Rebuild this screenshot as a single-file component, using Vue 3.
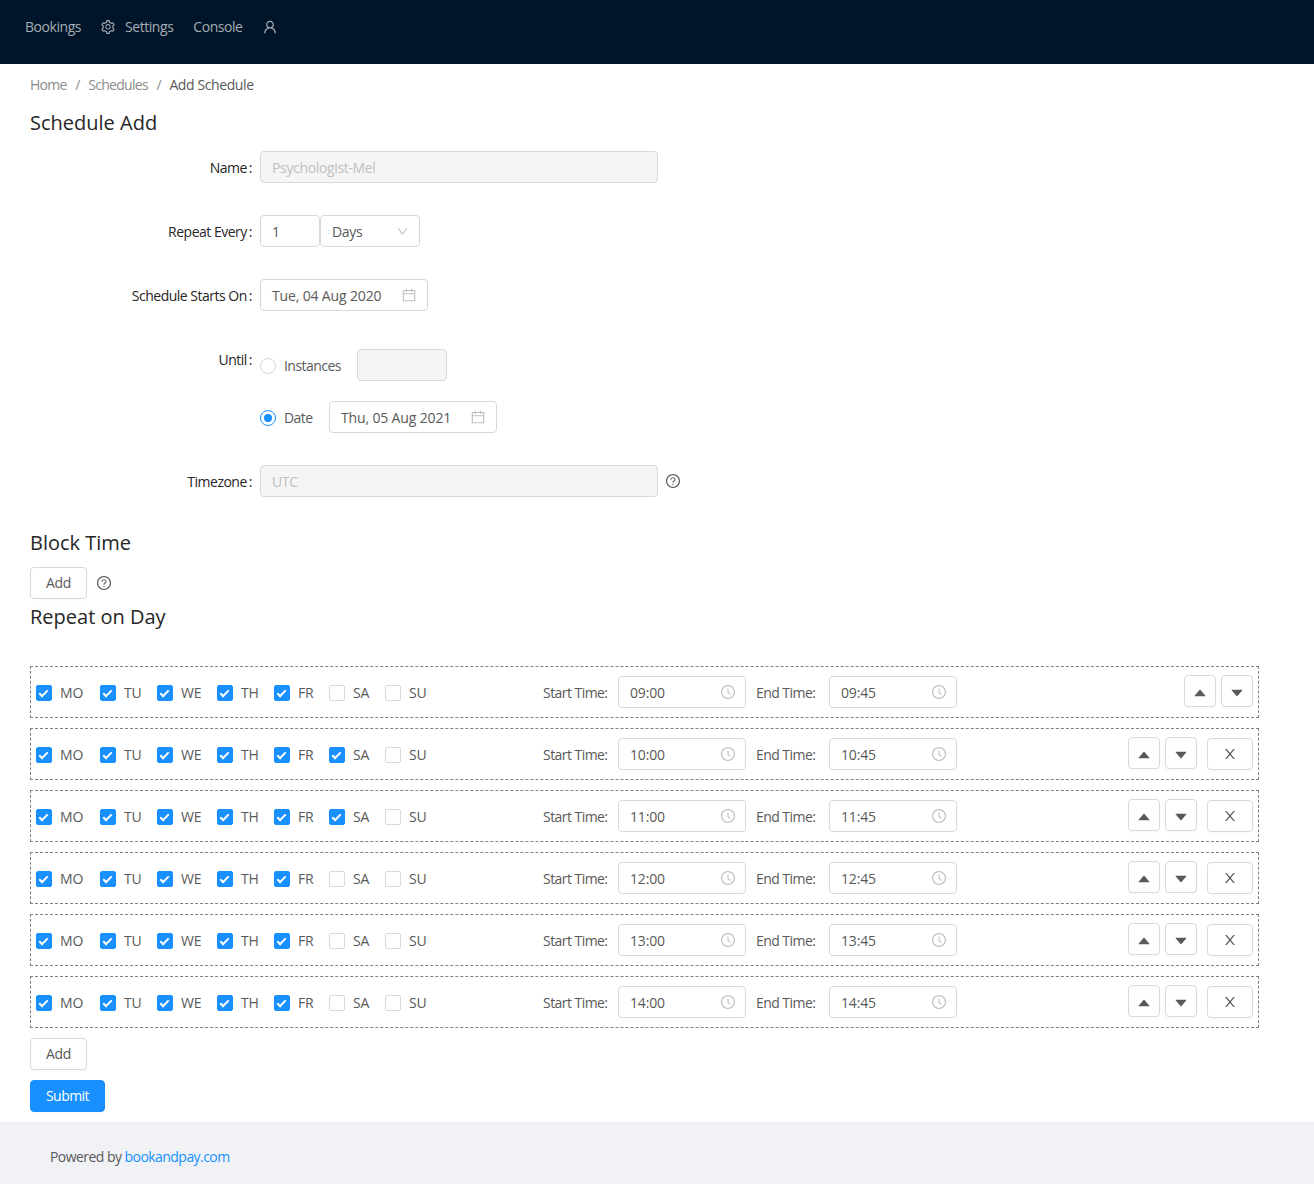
<script setup>
const icons = {
  gear: 'M924.8 625.7l-65.5-56c3.1-19 4.7-38.4 4.7-57.8s-1.6-38.8-4.7-57.8l65.5-56a32.03 32.03 0 0 0 9.3-35.2l-.9-2.6a443.74 443.74 0 0 0-79.7-137.9l-1.8-2.1a32.12 32.12 0 0 0-35.1-9.5l-81.3 28.9c-30-24.6-63.5-44-99.7-57.6l-15.7-85a32.05 32.05 0 0 0-25.8-25.7l-2.7-.5c-52.1-9.4-106.9-9.4-159 0l-2.7.5a32.05 32.05 0 0 0-25.8 25.7l-15.8 85.4a351.86 351.86 0 0 0-99 57.4l-81.9-29.1a32 32 0 0 0-35.1 9.5l-1.8 2.1a446.02 446.02 0 0 0-79.7 137.9l-.9 2.6c-4.5 12.5-.8 26.5 9.3 35.2l66.3 56.6c-3.1 18.8-4.6 38-4.6 57.1 0 19.2 1.5 38.4 4.6 57.1L99 625.5a32.03 32.03 0 0 0-9.3 35.2l.9 2.6c18.1 50.4 44.9 96.9 79.7 137.9l1.8 2.1a32.12 32.12 0 0 0 35.1 9.5l81.9-29.1c29.8 24.5 63.1 43.9 99 57.4l15.8 85.4a32.05 32.05 0 0 0 25.8 25.7l2.7.5a449.4 449.4 0 0 0 159 0l2.7-.5a32.05 32.05 0 0 0 25.8-25.7l15.7-85a350 350 0 0 0 99.7-57.6l81.3 28.9a32 32 0 0 0 35.1-9.5l1.8-2.1c34.8-41.1 61.6-87.5 79.7-137.9l.9-2.6c4.5-12.3.8-26.3-9.3-35zM788.3 465.9c2.5 15.1 3.8 30.6 3.8 46.1s-1.3 31-3.8 46.1l-6.6 40.1 74.7 63.9a370.03 370.03 0 0 1-42.6 73.6L721 702.8l-31.4 25.8c-23.9 19.6-50.5 35-79.3 45.8l-38.1 14.3-17.9 97a377.5 377.5 0 0 1-85 0l-17.9-97.2-37.8-14.5c-28.5-10.8-55-26.2-78.7-45.7l-31.4-25.9-93.4 33.2c-17-22.9-31.2-47.6-42.6-73.6l75.5-64.5-6.5-40c-2.4-14.9-3.7-30.3-3.7-45.5 0-15.3 1.2-30.6 3.7-45.5l6.5-40-75.5-64.5c11.3-26.1 25.6-50.7 42.6-73.6l93.4 33.2 31.4-25.9c23.7-19.5 50.2-34.9 78.7-45.7l37.9-14.3 17.9-97.2c28.1-3.2 56.8-3.2 85 0l17.9 97 38.1 14.3c28.7 10.8 55.4 26.2 79.3 45.8l31.4 25.8 92.8-32.9c17 22.9 31.2 47.6 42.6 73.6L781.8 426l6.5 39.9zM512 326c-97.2 0-176 78.8-176 176s78.8 176 176 176 176-78.8 176-176-78.8-176-176-176zm79.2 255.2A111.6 111.6 0 0 1 512 614c-29.9 0-58-11.7-79.2-32.8A111.6 111.6 0 0 1 400 502c0-29.9 11.7-58 32.8-79.2C454 401.6 482.1 390 512 390c29.9 0 58 11.6 79.2 32.8A111.6 111.6 0 0 1 624 502c0 29.9-11.7 58-32.8 79.2z',
  user: 'M858.5 763.6a374 374 0 0 0-80.6-119.5 375.63 375.63 0 0 0-119.5-80.6c-.4-.2-.8-.3-1.2-.5C719.5 518 760 444.7 760 362c0-137-111-248-248-248S264 225 264 362c0 82.7 40.5 156 102.8 201.1-.4.2-.8.3-1.2.5-44.8 18.9-85 46-119.5 80.6a375.63 375.63 0 0 0-80.6 119.5A371.7 371.7 0 0 0 136 901.8a8 8 0 0 0 8 8.2h60c4.4 0 7.9-3.5 8-7.8 2-77.2 33-149.5 87.8-204.3 56.7-56.7 132-87.9 212.2-87.9s155.5 31.2 212.2 87.9C779 752.7 810 825 812 902.2c.1 4.4 3.6 7.8 8 7.8h60a8 8 0 0 0 8-8.2c-1-47.8-10.9-94.3-29.5-138.2zM512 534c-45.9 0-89.1-17.9-121.6-50.4S340 407.9 340 362c0-45.9 17.9-89.1 50.4-121.6S466.1 190 512 190s89.1 17.9 121.6 50.4S684 316.1 684 362c0 45.9-17.9 89.1-50.4 121.6S557.9 534 512 534z',
  calendar: 'M880 184H712v-64c0-4.4-3.6-8-8-8h-56c-4.4 0-8 3.6-8 8v64H384v-64c0-4.4-3.6-8-8-8h-56c-4.4 0-8 3.6-8 8v64H144c-17.7 0-32 14.3-32 32v664c0 17.7 14.3 32 32 32h736c17.7 0 32-14.3 32-32V216c0-17.7-14.3-32-32-32zm-40 656H184V460h656v380zM184 392V256h128v48c0 4.4 3.6 8 8 8h56c4.4 0 8-3.6 8-8v-48h256v48c0 4.4 3.6 8 8 8h56c4.4 0 8-3.6 8-8v-48h128v136H184z',
  clock: 'M512 64C264.6 64 64 264.6 64 512s200.6 448 448 448 448-200.6 448-448S759.4 64 512 64zm0 820c-205.4 0-372-166.6-372-372s166.6-372 372-372 372 166.6 372 372-166.6 372-372 372zM686.7 638.6L544.1 535.5V288c0-4.4-3.6-8-8-8H488c-4.4 0-8 3.6-8 8v275.4c0 2.6 1.2 5 3.3 6.5l165.4 120.6c3.6 2.6 8.6 1.8 11.2-1.7l28.6-39c2.6-3.7 1.8-8.7-1.8-11.2z',
  help: 'M512 64C264.6 64 64 264.6 64 512s200.6 448 448 448 448-200.6 448-448S759.4 64 512 64zm0 820c-205.4 0-372-166.6-372-372s166.6-372 372-372 372 166.6 372 372-166.6 372-372 372zM623.6 316.7C593.6 290.4 554 276 512 276s-81.6 14.5-111.6 40.7C369.2 344 352 380.7 352 420v7.6c0 4.4 3.6 8 8 8h48c4.4 0 8-3.6 8-8V420c0-44.1 43.1-80 96-80s96 35.9 96 80c0 31.1-22 59.6-56.1 72.7-21.2 8.1-39.2 22.3-52.1 40.9-13.1 19-19.9 41.8-19.9 64.9V620c0 4.4 3.6 8 8 8h48c4.4 0 8-3.6 8-8v-22.7a48.3 48.3 0 0 1 30.9-44.8c59-22.7 97.1-74.7 97.1-132.5.1-39.3-17.1-76-48.3-103.3zM472 732a40 40 0 1 0 80 0 40 40 0 1 0-80 0z',
  up: 'M858.9 689L530.5 308.2c-9.4-10.9-27.5-10.9-37 0L165.1 689c-12.2 14.2-1.2 35 18.5 35h656.8c19.7 0 30.7-20.8 18.5-35z',
  down: 'M840.4 300H183.6c-19.7 0-30.7 20.8-18.5 35l328.4 380.8c9.4 10.9 27.5 10.9 37 0L858.9 335c12.2-14.2 1.2-35-18.5-35z',
  close: 'M563.8 512l262.5-312.9c4.4-5.2.7-13.1-6.1-13.1h-79.8c-4.7 0-9.2 2.1-12.3 5.7L511.6 449.8 295.1 191.7c-3-3.6-7.5-5.7-12.3-5.7H203c-6.8 0-10.5 7.9-6.1 13.1L459.4 512 196.9 824.9A7.95 7.95 0 0 0 203 838h79.8c4.7 0 9.2-2.1 12.3-5.7l216.5-258.1 216.5 258.1c3 3.6 7.5 5.7 12.3 5.7h79.8c6.8 0 10.5-7.9 6.1-13.1L563.8 512z',
  chevron: 'M884 256h-75c-5.1 0-9.9 2.5-12.9 6.6L512 654.2 227.9 262.6c-3-4.1-7.8-6.6-12.9-6.6h-75c-6.5 0-10.3 7.4-6.5 12.7l352.6 486.1c12.8 17.6 39 17.6 51.7 0l352.6-486.1c3.9-5.3.1-12.7-6.4-12.7z'
}
const dayNames = ['MO', 'TU', 'WE', 'TH', 'FR', 'SA', 'SU']
const base = [1, 1, 1, 1, 1, 0, 0]
const sat = [1, 1, 1, 1, 1, 1, 0]
const rows = [
  { start: '09:00', end: '09:45', days: base, removable: false },
  { start: '10:00', end: '10:45', days: sat, removable: true },
  { start: '11:00', end: '11:45', days: sat, removable: true },
  { start: '12:00', end: '12:45', days: base, removable: true },
  { start: '13:00', end: '13:45', days: base, removable: true },
  { start: '14:00', end: '14:45', days: base, removable: true }
]
</script>

<template>
  <div class="page">
    <header class="topbar">
      <span class="nav">Bookings</span>
      <span class="nav"><svg class="ico gear" viewBox="0 0 1024 1024"><path :d="icons.gear" /></svg>Settings</span>
      <span class="nav">Console</span>
      <span class="nav"><svg class="ico person" viewBox="0 0 1024 1024"><path :d="icons.user" /></svg></span>
    </header>

    <main class="content">
      <nav class="crumbs">
        <span class="muted">Home</span><span class="sep">/</span><span class="muted">Schedules</span><span class="sep">/</span><span class="current">Add Schedule</span>
      </nav>
      <h2 class="title first">Schedule Add</h2>

      <div class="form">
        <div class="item">
          <label class="lbl">Name</label>
          <div class="input disabled wide">Psychologist-Mel</div>
        </div>
        <div class="item">
          <label class="lbl">Repeat Every</label>
          <div class="input num">1</div>
          <div class="input select">Days<svg class="ico chev" viewBox="0 0 1024 1024"><path :d="icons.chevron" /></svg></div>
        </div>
        <div class="item">
          <label class="lbl">Schedule Starts On</label>
          <div class="input date">Tue, 04 Aug 2020<svg class="ico cal" viewBox="0 0 1024 1024"><path :d="icons.calendar" /></svg></div>
        </div>
        <div class="item">
          <label class="lbl">Until</label>
          <div class="radios">
            <div class="radio-row">
              <span class="radio"></span><span class="radio-text instances">Instances</span>
              <div class="input disabled small"></div>
            </div>
            <div class="radio-row">
              <span class="radio on"></span><span class="radio-text dated">Date</span>
              <div class="input date">Thu, 05 Aug 2021<svg class="ico cal" viewBox="0 0 1024 1024"><path :d="icons.calendar" /></svg></div>
            </div>
          </div>
        </div>
        <div class="item">
          <label class="lbl">Timezone</label>
          <div class="input disabled wide">UTC</div>
          <svg class="ico help tz" viewBox="0 0 1024 1024"><path :d="icons.help" /></svg>
        </div>
      </div>

      <h2 class="title block">Block Time</h2>
      <div class="block-add">
        <button class="btn add">Add</button>
        <svg class="ico help" viewBox="0 0 1024 1024"><path :d="icons.help" /></svg>
      </div>
      <h2 class="title repeat">Repeat on Day</h2>

      <div class="rows">
        <div v-for="row in rows" :key="row.start" class="row">
          <div class="days">
            <span v-for="(d, i) in dayNames" :key="d" class="day">
              <span class="check" :class="{ on: row.days[i] }"></span>{{ d }}
            </span>
          </div>
          <span class="t-lbl start">Start Time:</span>
          <div class="input time">{{ row.start }}<svg class="ico clock" viewBox="0 0 1024 1024"><path :d="icons.clock" /></svg></div>
          <span class="t-lbl end">End Time:</span>
          <div class="input time">{{ row.end }}<svg class="ico clock" viewBox="0 0 1024 1024"><path :d="icons.clock" /></svg></div>
          <div class="actions">
            <button class="btn sq"><svg class="ico" viewBox="0 0 1024 1024"><path :d="icons.up" /></svg></button>
            <button class="btn sq"><svg class="ico" viewBox="0 0 1024 1024"><path :d="icons.down" /></svg></button>
            <button v-if="row.removable" class="btn x"><svg class="ico" viewBox="0 0 1024 1024"><path :d="icons.close" /></svg></button>
          </div>
        </div>
      </div>

      <button class="btn add lower">Add</button>
      <button class="btn primary">Submit</button>
    </main>

    <footer class="foot">Powered by <a class="link">bookandpay.com</a></footer>
  </div>
</template>

<style scoped>
.page {
  font-family: "Open Sans", "Noto Sans", sans-serif;
  font-size: 14px;
  line-height: 22px;
  letter-spacing: -0.35px;
  color: #595959;
  background: #fff;
  min-height: 1184px;
  display: flex;
  flex-direction: column;
}
.ico { width: 16px; height: 16px; fill: currentColor; flex: none; display: block; }
.topbar {
  height: 64px;
  background: #001529;
  box-sizing: border-box;
  padding: 16px 0 0 25px;
  display: flex;
  gap: 20px;
  align-items: flex-start;
  color: #a6adb4;
  letter-spacing: -0.45px;
}
.nav { display: flex; align-items: center; height: 22px; }
.nav .gear { margin: 0 9px 0 -1px; }
.nav .person { margin-left: -1px; }
.content { padding: 10px 55px 10px 30px; flex: 1; }
.crumbs { display: flex; height: 22px; letter-spacing: -0.7px; }
.current { letter-spacing: -0.4px; }
.muted { color: #8c8c8c; }
.sep { color: #8c8c8c; margin: 0 8.5px; }
.title { margin: 0; font-size: 20px; line-height: 28px; font-weight: 400; color: #262626; letter-spacing: 0; }
.title.first { margin-top: 13px; }
.form { margin-top: 14px; }
.item { display: flex; align-items: flex-start; margin-bottom: 32px; min-height: 32px; }
.lbl { width: 230px; height: 32px; flex: none; text-align: right; line-height: 34px; color: #262626; white-space: nowrap; letter-spacing: -0.5px; }
.lbl::after { content: ":"; margin: 0 8px 0 2px; }
.input {
  box-sizing: border-box;
  height: 32px;
  border: 1px solid #d9d9d9;
  border-radius: 4px;
  padding: 2px 11px 0;
  display: flex;
  align-items: center;
  justify-content: space-between;
  color: #595959;
  background: #fff;
}
.input .ico { margin-bottom: 2px; }
.disabled { background: #f5f5f5; color: #bfbfbf; }
.wide { width: 398px; }
.num { width: 60px; }
.select { width: 100px; }
.date { width: 168px; letter-spacing: -0.15px; }
.small { width: 90px; margin-left: 16px; }
.input .chev { width: 13px; height: 13px; color: #bfbfbf; margin-right: -1px; }
.input .cal { color: #bfbfbf; margin-right: -1px; }
.help { color: #595959; }
.tz { margin: 8px 0 0 7px; }
.radios { padding-top: 6px; display: flex; flex-direction: column; gap: 20px; }
.radio-row { display: flex; align-items: center; height: 32px; }
.radio-row .date { margin-left: 16px; }
.radio {
  width: 16px; height: 16px; box-sizing: border-box;
  border: 1px solid #d9d9d9; border-radius: 50%;
  position: relative; top: 1px; flex: none;
}
.radio.on { border-color: #1890ff; }
.radio.on::after {
  content: ""; position: absolute; left: 3px; top: 3px;
  width: 8px; height: 8px; border-radius: 50%; background: #1890ff;
}
.radio-text { margin-left: 8px; position: relative; top: 1px; letter-spacing: -0.55px; }
.instances { width: 57px; }
.dated { width: 29px; }
.block-add { display: flex; align-items: center; gap: 9px; margin-top: 10px; height: 32px; }
.title.repeat { margin-top: 4px; }
.btn {
  font: inherit;
  letter-spacing: inherit;
  box-sizing: border-box;
  height: 32px;
  border: 1px solid #d9d9d9;
  border-radius: 4px;
  background: #fff;
  color: #595959;
  padding: 0;
  display: inline-flex;
  align-items: center;
  justify-content: center;
  box-shadow: 0 2px 0 rgba(0, 0, 0, 0.015);
}
.add { width: 57px; }
.rows { margin-top: 35px; display: flex; flex-direction: column; gap: 10px; }
.row {
  box-sizing: border-box;
  height: 52px;
  border: 1px dashed #808080;
  padding: 0 5px;
  display: flex;
  align-items: center;
}
.days {
  flex: 0 0 507px;
  display: grid;
  grid-template-columns: 64px 57px 60px 57px 55px 56px auto;
  margin-top: 2px;
}
.day { display: flex; align-items: center; letter-spacing: -0.2px; }
.check {
  width: 16px; height: 16px; box-sizing: border-box;
  border: 1px solid #d9d9d9; border-radius: 2px;
  margin-right: 8px; position: relative; flex: none;
}
.check.on { background: #1890ff; border-color: #1890ff; }
.check.on::after {
  content: ""; position: absolute; left: 4px; top: 1.5px;
  width: 5px; height: 9px; box-sizing: border-box;
  border: 2px solid #fff; border-top: 0; border-left: 0;
  transform: rotate(45deg);
}
.t-lbl { flex: none; padding-top: 2px; letter-spacing: -0.55px; }
.t-lbl.start { width: 75px; }
.t-lbl.end { width: 73px; margin-left: 10px; }
.time { width: 128px; letter-spacing: -0.15px; }
.input .clock { color: #bfbfbf; margin-right: -2px; }
.actions { margin-left: auto; display: flex; gap: 5px; align-items: center; }
.sq { width: 32px; margin-bottom: 2px; padding-top: 4px; color: #595959; }
.x { width: 46px; margin-left: 5px; }
.lower { display: flex; margin-top: 10px; }
.primary {
  display: flex; margin-top: 10px; width: 75px;
  background: #1890ff; border-color: #1890ff; color: #fff;
  letter-spacing: -0.55px;
}
.foot {
  height: 62px;
  box-sizing: border-box;
  padding: 24px 50px 0;
  background: #f0f2f5;
  letter-spacing: -0.55px;
}
.link { color: #1890ff; }
</style>
